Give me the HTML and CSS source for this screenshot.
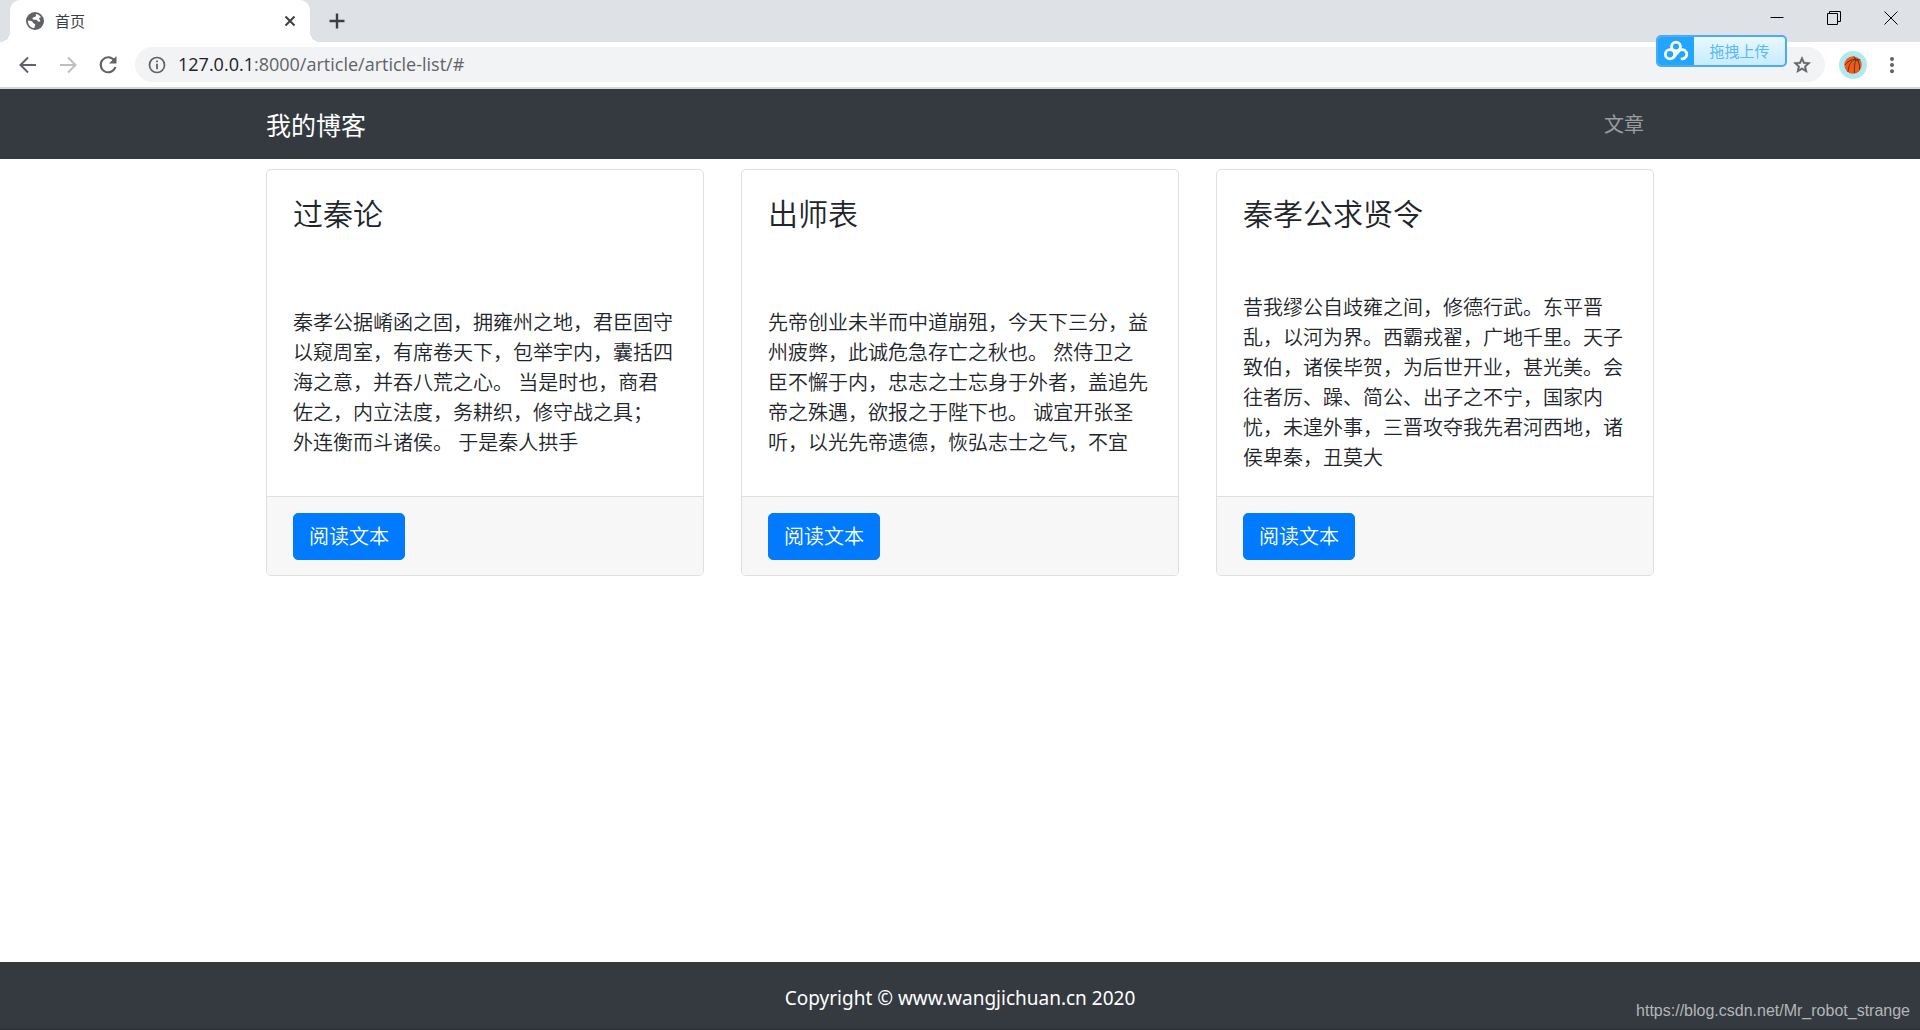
FILE: index.html
```html
<!DOCTYPE html>
<html lang="zh-CN">
<head>
<meta charset="utf-8">
<meta name="viewport" content="width=device-width, initial-scale=1">
<title>首页</title>
<link rel="stylesheet" href="styles.css">
</head>
<body class="page">
<div class="browser">
  <div class="tab-strip">
    <div class="tab">
      <svg class="tab-icon" viewBox="0 0 18 18" aria-hidden="true"><circle cx="9" cy="9" r="9" fill="#5f6368"/><path d="M2 8.500c1.500.3 3 .2 4.200 1 .9.700.6 1.700 1.700 2 1 .300 1.500.6 1.300 1.700-.2 1-.9 1.700-.7 2.900C4.500 16 1.800 12.800 2 8.500zM9.500 2c2.500.1 4.300 1.300 5.500 3.200-.8.500-1.700.3-2 1.100-.4.900 1 1.300 1.200 2.200.2.800-.7 1.300-1.500 1.200-1.500-.2-1.200-1.600-2.400-1.900-1.300-.3-2.600.3-3.500-.6-.8-.8-.1-1.700.9-1.900 1.200-.3 2.100-.5 2.300-1.500.1-.700-.2-1.200-.5-1.800z" fill="#fff"/></svg>
      <span class="tab-title">首页</span>
      <button class="icon-button tab-close" type="button" aria-label="关闭标签页"><svg width="12" height="12" viewBox="0 0 12 12"><path d="M1.500 1.500l9 9M10.500 1.500l-9 9" stroke="#3c4043" stroke-width="2"/></svg></button>
    </div>
    <button class="icon-button new-tab" type="button" aria-label="新标签页"><svg width="16" height="16" viewBox="0 0 16 16"><path d="M8 .5v15M.5 8h15" stroke="#3c4043" stroke-width="2.400"/></svg></button>
    <div class="window-controls">
      <button class="icon-button" type="button" aria-label="最小化"><svg width="14" height="14" viewBox="0 0 14 14"><path d="M.5 6.500h13" stroke="#000"/></svg></button>
      <button class="icon-button" type="button" aria-label="还原"><svg width="14" height="14" viewBox="0 0 14 14"><path d="M.5 2.500h10v11H.5zM2.500 2V.5h11v10H11" fill="none" stroke="#000"/></svg></button>
      <button class="icon-button" type="button" aria-label="关闭"><svg width="14" height="14" viewBox="0 0 14 14"><path d="M.5.5l13 13M13.500.5l-13 13" stroke="#000"/></svg></button>
    </div>
  </div>
  <div class="toolbar">
    <button class="icon-button" type="button" aria-label="后退"><svg width="20" height="20" viewBox="0 0 20 20"><path d="M18 10H3M10 2.500L2.500 10l7.500 7.500" fill="none" stroke="#5f6368" stroke-width="2"/></svg></button>
    <button class="icon-button" type="button" aria-label="前进" disabled><svg width="20" height="20" viewBox="0 0 20 20"><path d="M2 10h15M10 2.500l7.500 7.500-7.500 7.500" fill="none" stroke="#bcbec0" stroke-width="2"/></svg></button>
    <button class="icon-button" type="button" aria-label="重新加载"><svg width="20" height="20" viewBox="0 0 20 20"><path d="M16.200 5.200A7.500 7.500 0 1 0 17.400 12" fill="none" stroke="#5f6368" stroke-width="2.100"/><path d="M18.500 1v7.500H11z" fill="#5f6368"/></svg></button>
    <div class="omnibox">
      <svg width="18" height="18" viewBox="0 0 18 18" aria-hidden="true"><circle cx="9" cy="9" r="7.500" fill="none" stroke="#5f6368" stroke-width="1.700"/><path d="M8.100 4.500h1.800v1.800H8.100zM8.100 7.800h1.800v5.400H8.100z" fill="#5f6368"/></svg>
      <div class="address" role="textbox" aria-label="地址栏" contenteditable="true" spellcheck="false"><span class="address-host">127.0.0.1</span>:8000/article/article-list/#</div>
      <button class="icon-button" type="button" aria-label="添加书签"><svg width="20" height="20" viewBox="0 0 24 24"><path d="M22 9.240l-7.190-.62L12 2 9.190 8.630 2 9.240l5.460 4.730L5.820 21 12 17.270 18.180 21l-1.630-7.030L22 9.240zM12 15.400l-3.760 2.270 1-4.280-3.320-2.880 4.380-.38L12 6.100l1.710 4.040 4.380.38-3.320 2.880 1 4.280L12 15.400z" fill="#5f6368" stroke="#5f6368" stroke-width=".7"/></svg></button>
    </div>
    <button class="icon-button avatar" type="button" aria-label="用户"><svg width="28" height="28" viewBox="0 0 28 28"><circle cx="14" cy="14" r="14" fill="#aeeaf0"/><circle cx="14" cy="14" r="8.700" fill="#f4581c"/><path d="M6 14c3.500-5 9-6.500 15.500-5M15 5.500c.5 2.500 1.300 3.500 5 5M17 7.500C12 10 9.500 14 9 21M17 8c-1.500 4-1.800 9-1.500 14M17.500 8c2.500 3 3.500 7 3 11" fill="none" stroke="#5b3a18" stroke-width="1"/></svg></button>
    <button class="icon-button" type="button" aria-label="菜单"><svg width="20" height="20" viewBox="0 0 20 20"><g fill="#5f6368"><circle cx="10" cy="4" r="2"/><circle cx="10" cy="10" r="2"/><circle cx="10" cy="16.300" r="2"/></g></svg></button>
  </div>
  <button class="upload" type="button">
    <span class="upload-logo"><svg width="26" height="22" viewBox="0 0 26 22" aria-hidden="true"><g fill="none" stroke="#fff" stroke-width="2.800"><circle cx="13" cy="6.500" r="4.400"/><circle cx="7" cy="14.300" r="4.600"/><path d="M10.500 17.300l5-5.800a4.600 4.600 0 1 1 3.500 7.400" stroke-linecap="round"/></g></svg></span>
    <span class="upload-label">拖拽上传</span>
  </button>
</div>

<nav class="navbar">
  <div class="container navbar-inner">
    <a class="brand" href="#">我的博客</a>
    <a class="nav-link" href="#">文章</a>
  </div>
</nav>

<main class="container cards">
  <article class="card">
    <div class="card-body">
      <h2 class="card-title">过秦论</h2>
      <p class="card-text">秦孝公据崤函之固，拥雍州之地，君臣固守以窥周室，有席卷天下，包举宇内，囊括四海之意，并吞八荒之心。 当是时也，商君佐之，内立法度，务耕织，修守战之具； 外连衡而斗诸侯。 于是秦人拱手</p>
    </div>
    <div class="card-footer"><a class="button" href="#">阅读文本</a></div>
  </article>
  <article class="card">
    <div class="card-body">
      <h2 class="card-title">出师表</h2>
      <p class="card-text">先帝创业未半而中道崩殂，今天下三分，益州疲弊，此诚危急存亡之秋也。 然侍卫之臣不懈于内，忠志之士忘身于外者，盖追先帝之殊遇，欲报之于陛下也。 诚宜开张圣听，以光先帝遗德，恢弘志士之气，不宜</p>
    </div>
    <div class="card-footer"><a class="button" href="#">阅读文本</a></div>
  </article>
  <article class="card">
    <div class="card-body">
      <h2 class="card-title">秦孝公求贤令</h2>
      <p class="card-text">昔我缪公自歧雍之间，修德行武。东平晋乱，以河为界。西霸戎翟，广地千里。天子致伯，诸侯毕贺，为后世开业，甚光美。会往者厉、躁、简公、出子之不宁，国家内忧，未遑外事，三晋攻夺我先君河西地，诸侯卑秦，丑莫大</p>
    </div>
    <div class="card-footer"><a class="button" href="#">阅读文本</a></div>
  </article>
</main>

<footer class="footer">
  <p class="copyright">Copyright © www.wangjichuan.cn 2020</p>
  <span class="watermark">https://blog.csdn.net/Mr_robot_strange</span>
</footer>
</body>
</html>
```

FILE: styles.css
```css
*,
*::before,
*::after {
  box-sizing: border-box;
}

.page {
  margin: 0;
  min-height: 100vh;
  display: flex;
  flex-direction: column;
  background: #fff;
  color: #212529;
  font-family: "Open Sans", "Noto Sans CJK SC", sans-serif;
  font-size: 20px;
  line-height: 30px;
}

/* Browser window */
.browser {
  position: relative;
  border-bottom: 2px solid #d5d7da;
}

.icon-button {
  display: flex;
  align-items: center;
  justify-content: center;
  padding: 0;
  border: 0;
  background: none;
}

.tab-strip {
  display: flex;
  height: 42px;
  padding-left: 10px;
  background: #dee1e6;
}

.tab {
  position: relative;
  display: flex;
  align-items: center;
  width: 300px;
  padding: 0 14px 0 16px;
  border-radius: 10px 10px 0 0;
  background: #fff;
}

.tab::before,
.tab::after {
  content: "";
  position: absolute;
  bottom: 0;
  width: 10px;
  height: 10px;
}

.tab::before {
  right: 100%;
  background: radial-gradient(circle at 0 0, #dee1e6 10px, #fff 10px);
}

.tab::after {
  left: 100%;
  background: radial-gradient(circle at 100% 0, #dee1e6 10px, #fff 10px);
}

.tab-icon {
  width: 18px;
  height: 18px;
}

.tab-title {
  flex: 1;
  margin-left: 11px;
  color: #3c4043;
  font-size: 15px;
}

.new-tab {
  width: 54px;
}

.window-controls {
  display: flex;
  gap: 43px;
  height: 36px;
  margin-left: auto;
  padding-right: 22px;
}

.toolbar {
  display: flex;
  align-items: center;
  gap: 20px;
  height: 45px;
  padding: 0 18px;
}

.omnibox {
  flex: 1;
  display: flex;
  align-items: center;
  gap: 12px;
  height: 35px;
  margin: 0 -6px 0 -3px;
  padding: 0 13px;
  border-radius: 18px;
  background: #f1f3f4;
}

.address {
  flex: 1;
  color: #5f6368;
  font-size: 18px;
  line-height: 30px;
  padding-bottom: 2px;
  white-space: nowrap;
}

.address-host {
  color: #202124;
}

.avatar {
  margin-right: -5px;
}

.upload {
  position: absolute;
  top: 35px;
  right: 133px;
  display: flex;
  width: 131px;
  height: 32px;
  padding: 0;
  overflow: hidden;
  border: 2px solid #4daaf8;
  border-radius: 5px;
  background: linear-gradient(#e8f8ff, #c8ecff);
  color: #5bb8fa;
  font-family: inherit;
  font-size: 15px;
}

.upload-logo {
  display: flex;
  align-items: center;
  justify-content: center;
  width: 36px;
  height: 100%;
  background: #22a5ff;
}

.upload-label {
  flex: 1;
  line-height: 28px;
}

/* Site header */
.container {
  width: 100%;
  max-width: 1428px;
  margin: 0 auto;
  padding: 0 20px;
}

.navbar {
  padding: 11px 0 9px;
  background: #343a40;
}

.navbar-inner {
  display: flex;
  align-items: center;
  justify-content: space-between;
}

.brand {
  color: #fff;
  font-size: 25px;
  line-height: 50px;
  text-decoration: none;
}

.nav-link {
  padding: 10px;
  color: rgba(255, 255, 255, 0.5);
  text-decoration: none;
}

/* Article cards */
.cards {
  display: grid;
  grid-template-columns: repeat(auto-fit, minmax(320px, 1fr));
  gap: 37px;
  padding-top: 10px;
  padding-bottom: 40px;
}

.card {
  display: flex;
  flex-direction: column;
  border: 1px solid #dfdfdf;
  border-radius: 5px;
  overflow: hidden;
}

.card-body {
  flex: 1;
  display: flex;
  flex-direction: column;
  padding: 26px 26px 23px;
}

.card-title {
  margin: 0 0 61px;
  font-size: 30px;
  font-weight: 350;
  line-height: 36px;
}

.card-text {
  margin: auto 0;
  font-weight: 350;
}

.card-footer {
  display: flex;
  padding: 16px 26px 15px;
  border-top: 1px solid #dfdfdf;
  background: #f7f7f7;
}

.button {
  padding: 8px 15px;
  border: 1px solid #007bff;
  border-radius: 5px;
  background: #007bff;
  color: #fff;
  font-weight: 350;
  line-height: 29px;
  text-decoration: none;
}

/* Site footer */
.footer {
  position: relative;
  margin-top: auto;
  padding: 23px 20px 17px;
  border-bottom: 1px solid #2b2f34;
  background: #343a40;
  color: #fff;
  text-align: center;
}

.copyright {
  margin: 0;
  font-family: "Noto Sans", sans-serif;
  font-size: 19px;
  line-height: 27px;
}

.watermark {
  position: absolute;
  right: 10px;
  bottom: 8px;
  color: #b4b6b8;
  font-family: "Liberation Sans", Arial, sans-serif;
  font-size: 16px;
  line-height: 20px;
}
```
